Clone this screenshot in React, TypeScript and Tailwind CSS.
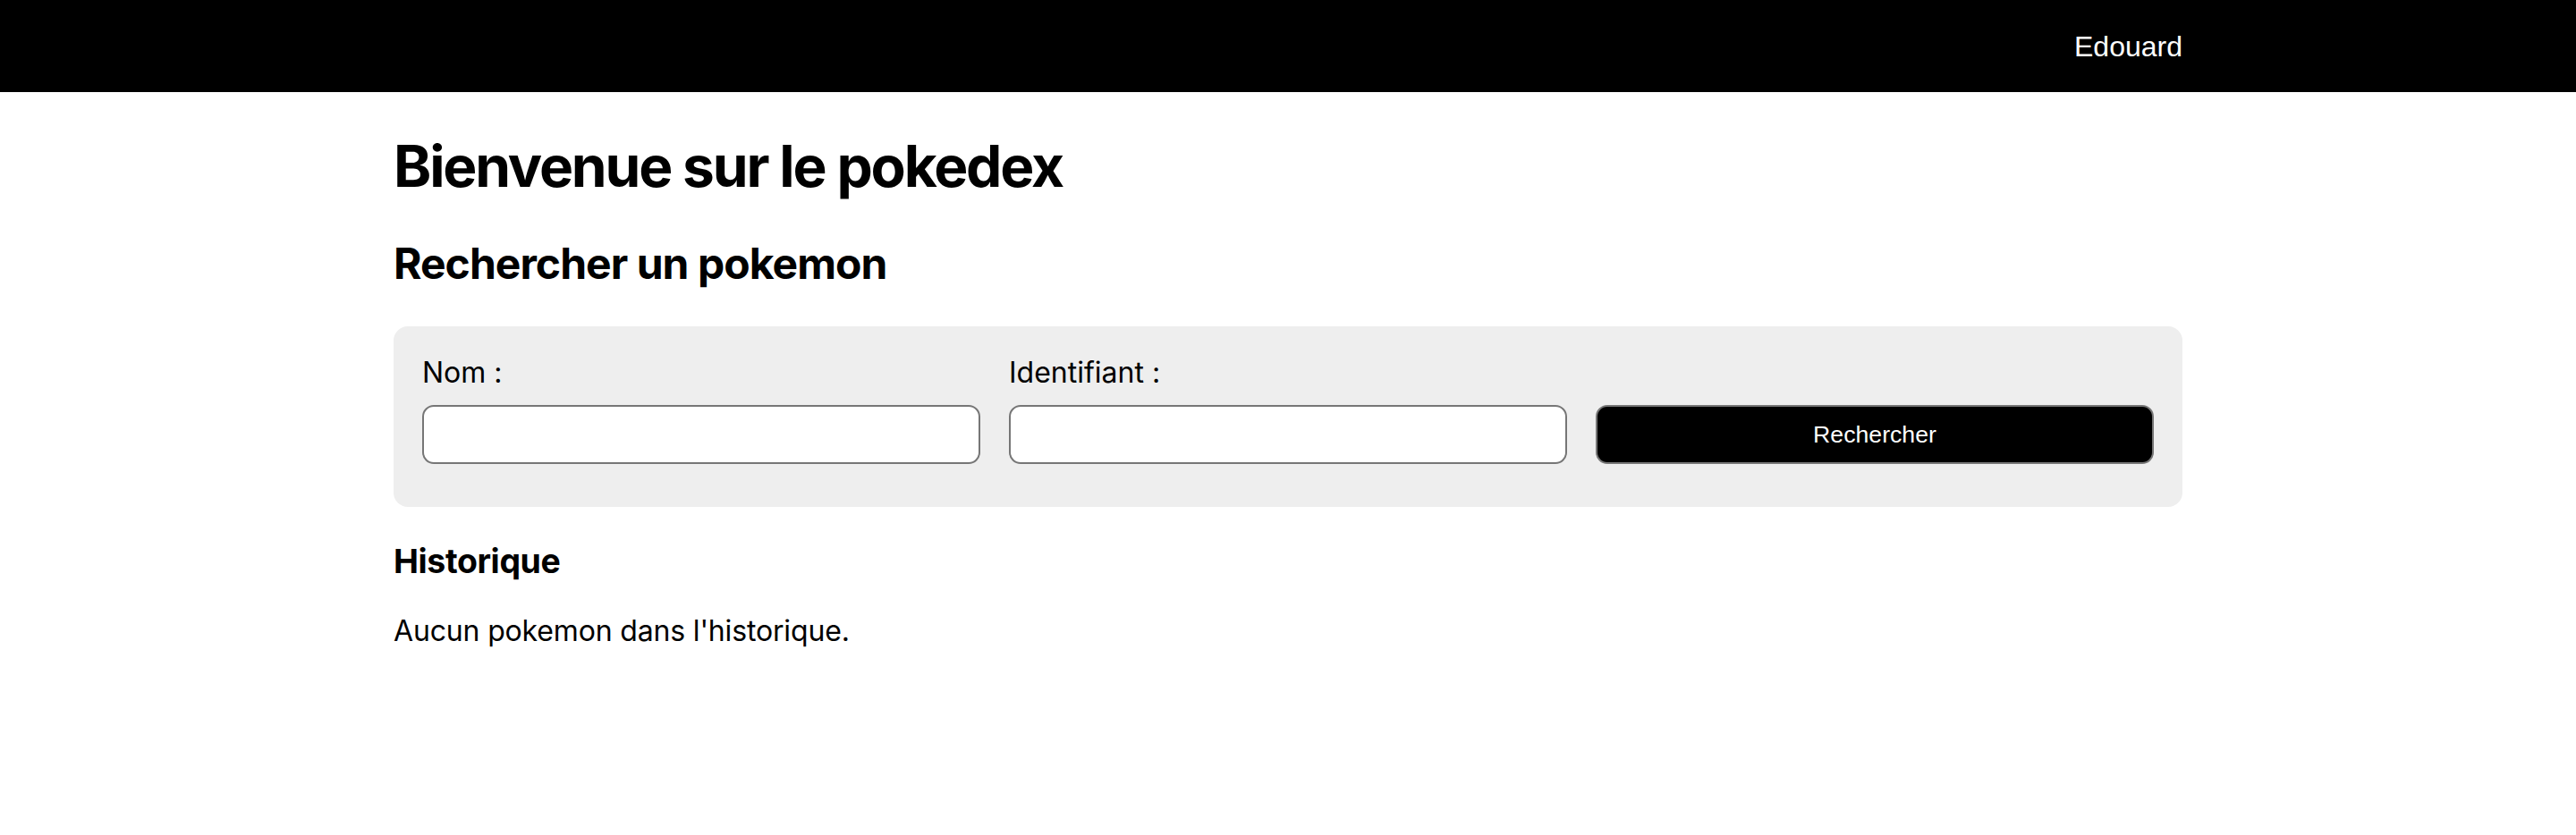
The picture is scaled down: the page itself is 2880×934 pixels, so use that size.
import React from "react";

export default function App() {
  return (
    <div className="min-h-screen bg-white text-black" style={{ fontFamily: "Inter, 'Noto Sans', sans-serif" }}>
      <header className="h-[103px] bg-black">
        <div className="max-w-[2000px] mx-auto h-full flex items-center justify-end">
          <span className="text-[32px] text-white font-['Liberation_Sans',Arial,sans-serif]">Edouard</span>
        </div>
      </header>

      <main className="max-w-[2000px] mx-auto">
        <h1 className="mt-[43px] text-[64px] leading-[80px] font-bold tracking-[-0.034em]">Bienvenue sur le pokedex</h1>
        <h2 className="mt-[39px] text-[48px] leading-[60px] font-bold tracking-[-0.02em]">Rechercher un pokemon</h2>

        <form className="mt-[40px] bg-[#eeeeee] rounded-[16px] px-[32px] pt-[32px] pb-[32px] grid grid-cols-3 gap-x-[32px]">
          <div className="flex flex-col mb-[16px]">
            <label className="text-[32px] leading-[40px] mb-[16px]">Nom :</label>
            <input type="text" className="h-[66px] bg-white border-2 border-[#767676] rounded-[13px] px-3 text-[32px]" />
          </div>
          <div className="flex flex-col mb-[16px]">
            <label className="text-[32px] leading-[40px] mb-[16px]">Identifiant :</label>
            <input type="text" className="h-[66px] bg-white border-2 border-[#767676] rounded-[13px] px-3 text-[32px]" />
          </div>
          <div className="flex flex-col justify-end mb-[16px]">
            <button type="button" className="h-[66px] bg-black text-white border-2 border-[#767676] rounded-[13px] text-[26.67px] font-['Liberation_Sans',Arial,sans-serif]">
              Rechercher
            </button>
          </div>
        </form>

        <h3 className="mt-[38px] text-[37.44px] leading-[46px] font-bold tracking-[-0.01em]">Historique</h3>
        <p className="mt-[35px] text-[32px] leading-[40px] tracking-[-0.005em]">Aucun pokemon dans l'historique.</p>
      </main>
    </div>
  );
}
